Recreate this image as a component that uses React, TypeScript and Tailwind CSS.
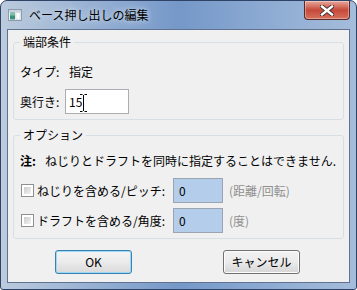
import React from "react";

const font = { fontFamily: '"Noto Sans CJK JP", "Noto Sans", sans-serif' };

function WinIcon() {
  return (
    <svg width="14" height="12" viewBox="0 0 14 12" className="block">
      <rect x="0.5" y="0.5" width="13" height="11" fill="#eef2f6" stroke="#8d9aab" />
      <rect x="1" y="1" width="12" height="2" fill="#c9d3de" />
      <rect x="2" y="3.5" width="5" height="7" fill="#3f8f7d" />
      <rect x="2" y="3.5" width="5" height="3" fill="#7fc1a8" />
      <rect x="8" y="3.5" width="4" height="7" fill="#ffffff" stroke="#b7c2cf" strokeWidth="0.5" />
    </svg>
  );
}

function CloseButton() {
  return (
    <div className="ml-auto mr-[6px] w-[46px] h-[19px] rounded-b-[4px] border border-t-0 border-[#5a2a28] bg-gradient-to-b from-[#e6a89d] via-[#c6493a] to-[#d5705a] flex items-center justify-center shadow-[inset_0_0_0_1px_rgba(255,255,255,0.35)]">
      <svg width="14" height="11" viewBox="0 0 14 11">
        <path d="M2 1.5 L12 9.5 M12 1.5 L2 9.5" stroke="#3b2a2a" strokeWidth="4.2" strokeLinecap="square" />
        <path d="M2 1.5 L12 9.5 M12 1.5 L2 9.5" stroke="#ffffff" strokeWidth="2.4" strokeLinecap="square" />
      </svg>
    </div>
  );
}

function Checkbox() {
  return (
    <div className="w-[13px] h-[13px] border border-[#8e8f8f] bg-white p-[2px] shrink-0">
      <div className="w-full h-full bg-gradient-to-br from-[#cbcbcb] to-[#f4f4f4]" />
    </div>
  );
}

function IBeam() {
  return (
    <svg width="9" height="20" viewBox="0 0 9 20" className="absolute left-[13px] top-[3px]">
      <path d="M1 1.5 H3.5 M5.5 1.5 H8 M4.5 2 V18 M1 18.5 H3.5 M5.5 18.5 H8" stroke="#ffffff" strokeWidth="3" />
      <path d="M1 1.5 H3.5 M5.5 1.5 H8 M4.5 2 V18 M1 18.5 H3.5 M5.5 18.5 H8" stroke="#000000" strokeWidth="1" />
    </svg>
  );
}

export default function App() {
  return (
    <div className="w-[357px] h-[290px] bg-white text-[12px] text-black" style={font}>
      <div className="w-[357px] h-[290px] rounded-t-[7px] rounded-b-[3px] border border-[#2f4366] bg-gradient-to-r from-[#bccbdd] via-[#7598c9] to-[#a5bddb] flex flex-col overflow-hidden">
        {/* title bar */}
        <div className="h-[28px] flex items-start shrink-0">
          <div className="mt-[8px] ml-[7px]">
            <WinIcon />
          </div>
          <div className="mt-[5px] ml-[7px] text-[12px] leading-[18px] text-black [text-shadow:0_0_6px_rgba(255,255,255,0.9)]">
            ベース押し出しの編集
          </div>
          <CloseButton />
        </div>

        {/* client area */}
        <div className="ml-[6px] w-[343px] h-[254px] border border-[#5f7391] bg-[#f0f0f0] flex flex-col shrink-0">
          {/* group 1 */}
          <fieldset className="mx-[5px] mt-[4px] border border-[#d5dfe5] rounded-[3px] pl-[6px] pb-[5px]">
            <legend className="px-[3px] text-[12px] leading-[16px]">端部条件</legend>
            <div className="mt-[12px] h-[20px] flex items-center leading-[20px]">
              <span className="w-[49px]">タイプ:</span>
              <span>指定</span>
            </div>
            <div className="mt-[7px] h-[25px] flex items-center">
              <span className="w-[45px] leading-[20px]">奥行き:</span>
              <div className="relative w-[64px] h-[25px] border border-[#abadb3] bg-white pl-[3px] flex items-center leading-[20px]">
                15
                <IBeam />
              </div>
            </div>
          </fieldset>

          {/* group 2 */}
          <fieldset className="mx-[5px] mt-[7px] border border-[#d5dfe5] rounded-[3px] pl-[6px] pb-[5px]">
            <legend className="px-[3px] text-[12px] leading-[16px]">オプション</legend>
            <div className="mt-[8px] h-[20px] flex items-center leading-[20px]">
              <span className="w-[25px] font-bold">注:</span>
              <span>ねじりとドラフトを同時に指定することはできません.</span>
            </div>
            <div className="mt-[7px] h-[25px] flex items-center">
              <div className="ml-[1px]">
                <Checkbox />
              </div>
              <span className="ml-[3px] w-[136px] leading-[20px]">ねじりを含める/ピッチ:</span>
              <div className="w-[50px] h-[25px] border border-[#9aa5b1] bg-[#b4cdea] pl-[5px] flex items-center leading-[20px]">
                0
              </div>
              <span className="ml-[6px] text-[#8f8f8f] leading-[20px]">(距離/回転)</span>
            </div>
            <div className="mt-[5px] h-[25px] flex items-center">
              <div className="ml-[1px]">
                <Checkbox />
              </div>
              <span className="ml-[3px] w-[136px] leading-[20px]">ドラフトを含める/角度:</span>
              <div className="w-[50px] h-[25px] border border-[#9aa5b1] bg-[#b4cdea] pl-[5px] flex items-center leading-[20px]">
                0
              </div>
              <span className="ml-[6px] text-[#8f8f8f] leading-[20px]">(度)</span>
            </div>
          </fieldset>

          {/* buttons */}
          <div className="mt-[11px] flex">
            <div className="ml-[47px] w-[77px] h-[24px] rounded-[3px] border border-[#3c7fb1] bg-gradient-to-b from-[#f4f4f4] via-[#ebebeb] to-[#d9d9d9] shadow-[inset_0_0_0_1px_#9ad8f5] flex items-center justify-center leading-[20px]">
              OK
            </div>
            <div className="ml-[91px] w-[77px] h-[24px] rounded-[3px] border border-[#707070] bg-gradient-to-b from-[#f2f2f2] via-[#ebebeb] to-[#d5d5d5] shadow-[inset_0_0_0_1px_#fcfcfc] flex items-center justify-center leading-[20px]">
              キャンセル
            </div>
          </div>
        </div>
      </div>
    </div>
  );
}
